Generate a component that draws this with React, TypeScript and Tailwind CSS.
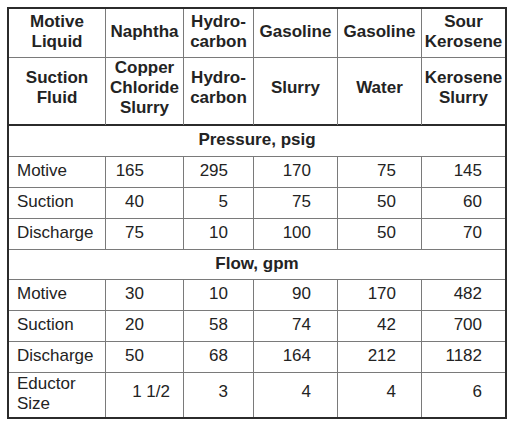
import React from "react";

const cols = "grid grid-cols-[97px_78px_70px_84px_84px_83px]";
const vline = "border-r border-[#7a7a7a]";

function HeadCell({ children, last, className = "" }: { children: React.ReactNode; last?: boolean; className?: string }) {
  return (
    <div className={`flex items-center justify-center text-center font-bold ${last ? "" : vline} ${className}`}>
      <div>{children}</div>
    </div>
  );
}

const pr = ["pr-[39px]", "pr-[25px]", "pr-[26px]", "pr-[25px]", "pr-[23px]"];

function DataRow({ label, values, className = "h-[31px]" }: { label: React.ReactNode; values: string[]; className?: string }) {
  return (
    <div className={`${cols} ${className} border-b border-[#7a7a7a]`}>
      <div className={`flex items-center pl-[8px] pb-[2px] ${vline}`}>{label}</div>
      {values.map((v, i) => (
        <div
          key={i}
          className={`flex items-center justify-end pb-[2px] ${i < 4 ? vline : ""} ${pr[i]}`}
        >
          {v}
        </div>
      ))}
    </div>
  );
}

export default function App() {
  return (
    <div className="bg-white w-[516px] h-[427px] p-[7px]">
      <div
        className="w-[500px] border-2 border-[#2b2b2b] text-[17px] leading-[20px] text-[#232323]"
        style={{ fontFamily: '"Liberation Sans", Arial, sans-serif' }}
      >
        <div className={`${cols} h-[49px] border-b border-[#7a7a7a]`}>
          <HeadCell className="pb-[2px]">Motive<br />Liquid</HeadCell>
          <HeadCell className="pb-[2px]">Naphtha</HeadCell>
          <HeadCell className="pb-[2px]">Hydro-<br />carbon</HeadCell>
          <HeadCell className="pb-[2px]">Gasoline</HeadCell>
          <HeadCell className="pb-[2px]">Gasoline</HeadCell>
          <HeadCell className="pb-[2px]" last>Sour<br />Kerosene</HeadCell>
        </div>
        <div className={`${cols} h-[68px] border-b-2 border-[#2b2b2b]`}>
          <HeadCell className="pb-[7px]">Suction<br />Fluid</HeadCell>
          <HeadCell className="pb-[7px]">Copper<br />Chloride<br />Slurry</HeadCell>
          <HeadCell className="pb-[7px]">Hydro-<br />carbon</HeadCell>
          <HeadCell className="pb-[7px]">Slurry</HeadCell>
          <HeadCell className="pb-[7px]">Water</HeadCell>
          <HeadCell className="pb-[7px]" last>Kerosene<br />Slurry</HeadCell>
        </div>
        <div className="h-[31px] flex items-center justify-center font-bold border-b border-[#7a7a7a] pb-[2px]">
          Pressure, psig
        </div>
        <DataRow label="Motive" values={["165", "295", "170", "75", "145"]} />
        <DataRow label="Suction" values={["40", "5", "75", "50", "60"]} />
        <DataRow label="Discharge" values={["75", "10", "100", "50", "70"]} />
        <div className="h-[30px] flex items-center justify-center font-bold border-b border-[#7a7a7a] pb-[2px]">
          Flow, gpm
        </div>
        <DataRow label="Motive" values={["30", "10", "90", "170", "482"]} />
        <DataRow label="Suction" values={["20", "58", "74", "42", "700"]} />
        <DataRow label="Discharge" values={["50", "68", "164", "212", "1182"]} />
        <div className={`${cols} h-[44px]`}>
          <div className={`flex items-center pl-[8px] pb-[2px] ${vline}`}>
            <div>Eductor<br />Size</div>
          </div>
          <div className={`flex items-center justify-end pb-[6px] pr-[13px] ${vline}`}>1 1/2</div>
          <div className={`flex items-center justify-end pb-[6px] ${vline} pr-[25px]`}>3</div>
          <div className={`flex items-center justify-end pb-[6px] ${vline} pr-[26px]`}>4</div>
          <div className={`flex items-center justify-end pb-[6px] ${vline} pr-[25px]`}>4</div>
          <div className="flex items-center justify-end pb-[6px] pr-[23px]">6</div>
        </div>
      </div>
    </div>
  );
}
